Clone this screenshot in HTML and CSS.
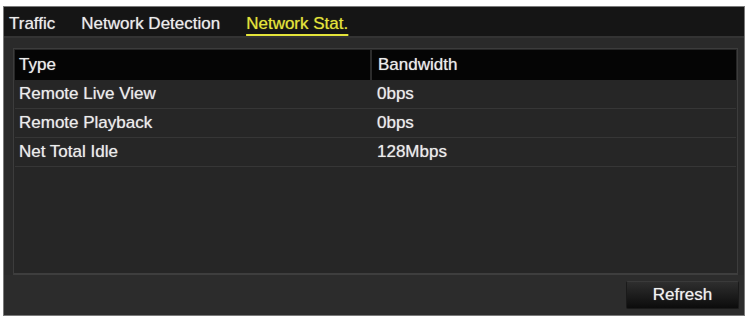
FILE: index.html
```html
<!DOCTYPE html>
<html lang="en">
<head>
    <meta charset="UTF-8">
    <title>Network Stat.</title>
    <link rel="stylesheet" href="styles.css">
</head>
<body>
    <div class="window">
        <div class="tabs">
            <span class="tab">Traffic</span>
            <span class="tab">Network Detection</span>
            <span class="tab active">Network Stat.</span>
        </div>

        <div class="content">
            <div class="table-box">
                <table class="stat-table">
                    <tr class="head">
                        <td class="col-type">Type</td>
                        <td>Bandwidth</td>
                    </tr>
                    <tr>
                        <td class="col-type">Remote Live View</td>
                        <td>0bps</td>
                    </tr>
                    <tr>
                        <td class="col-type">Remote Playback</td>
                        <td>0bps</td>
                    </tr>
                    <tr>
                        <td class="col-type">Net Total Idle</td>
                        <td>128Mbps</td>
                    </tr>
                </table>
            </div>
        </div>

        <div class="footer">
            <button class="btn">Refresh</button>
        </div>
    </div>
</body>
</html>
```

FILE: styles.css
```css
body {
    margin: 0;
    background: #ffffff;
    font-family: 'Liberation Sans', Arial, sans-serif;
    font-size: 17px;
    color: #e8e8e8;
}
.window {
    margin: 6px 3px 0 3px;
    height: 310px;
    box-sizing: border-box;
    border: 1px solid #7a7a7a;
    background: #2a2a2a;
    display: flex;
    flex-direction: column;
}
.tabs {
    height: 31px;
    box-sizing: border-box;
    padding: 7px 0 0 5px;
    background: #151515;
    border-bottom: 2px solid #333;
    display: flex;
    align-items: flex-start;
    gap: 26px;
}
.tab {
    color: #ececec;
    text-shadow: 0 0 1px rgba(255, 255, 255, 0.6);
}
.tab.active {
    color: #e4e43a;
    text-decoration: underline;
    text-decoration-thickness: 2px;
    text-underline-offset: 5px;
    text-shadow: 0 0 1px rgba(230, 230, 60, 0.6);
}
.content {
    flex: 1;
    padding: 10px 6px 0 9px;
    display: flex;
}
.table-box {
    flex: 1;
    border: 1px solid #3c3c3c;
    border-bottom: 2px solid #3e3e3e;
    background: #262626;
    padding: 1px 1px 0 1px;
}
.stat-table {
    width: 100%;
    border-collapse: collapse;
}
.stat-table td {
    height: 28px;
    padding: 0 6px;
    border-bottom: 1px solid #363636;
    color: #ececec;
    text-shadow: 0 0 1px rgba(255, 255, 255, 0.6);
}
.stat-table .col-type {
    width: 345px;
    padding-left: 4px;
}
.stat-table .head td {
    background: #050505;
    border-bottom: none;
    height: 30px;
}
.stat-table .head .col-type {
    border-right: 2px solid #2c2c2c;
}
.footer {
    height: 40px;
    display: flex;
    justify-content: flex-end;
    align-items: center;
    padding-right: 5px;
    background: #2c2c2c;
}
.btn {
    width: 113px;
    height: 28px;
    border: 1px solid #1a1a1a;
    border-top-color: #3a3a3a;
    border-radius: 2px;
    background: linear-gradient(#2e2e2e, #0c0c0c);
    color: #f0f0f0;
    font-family: 'Liberation Sans', Arial, sans-serif;
    font-size: 17px;
    text-shadow: 0 0 1px rgba(255, 255, 255, 0.6);
}
```
